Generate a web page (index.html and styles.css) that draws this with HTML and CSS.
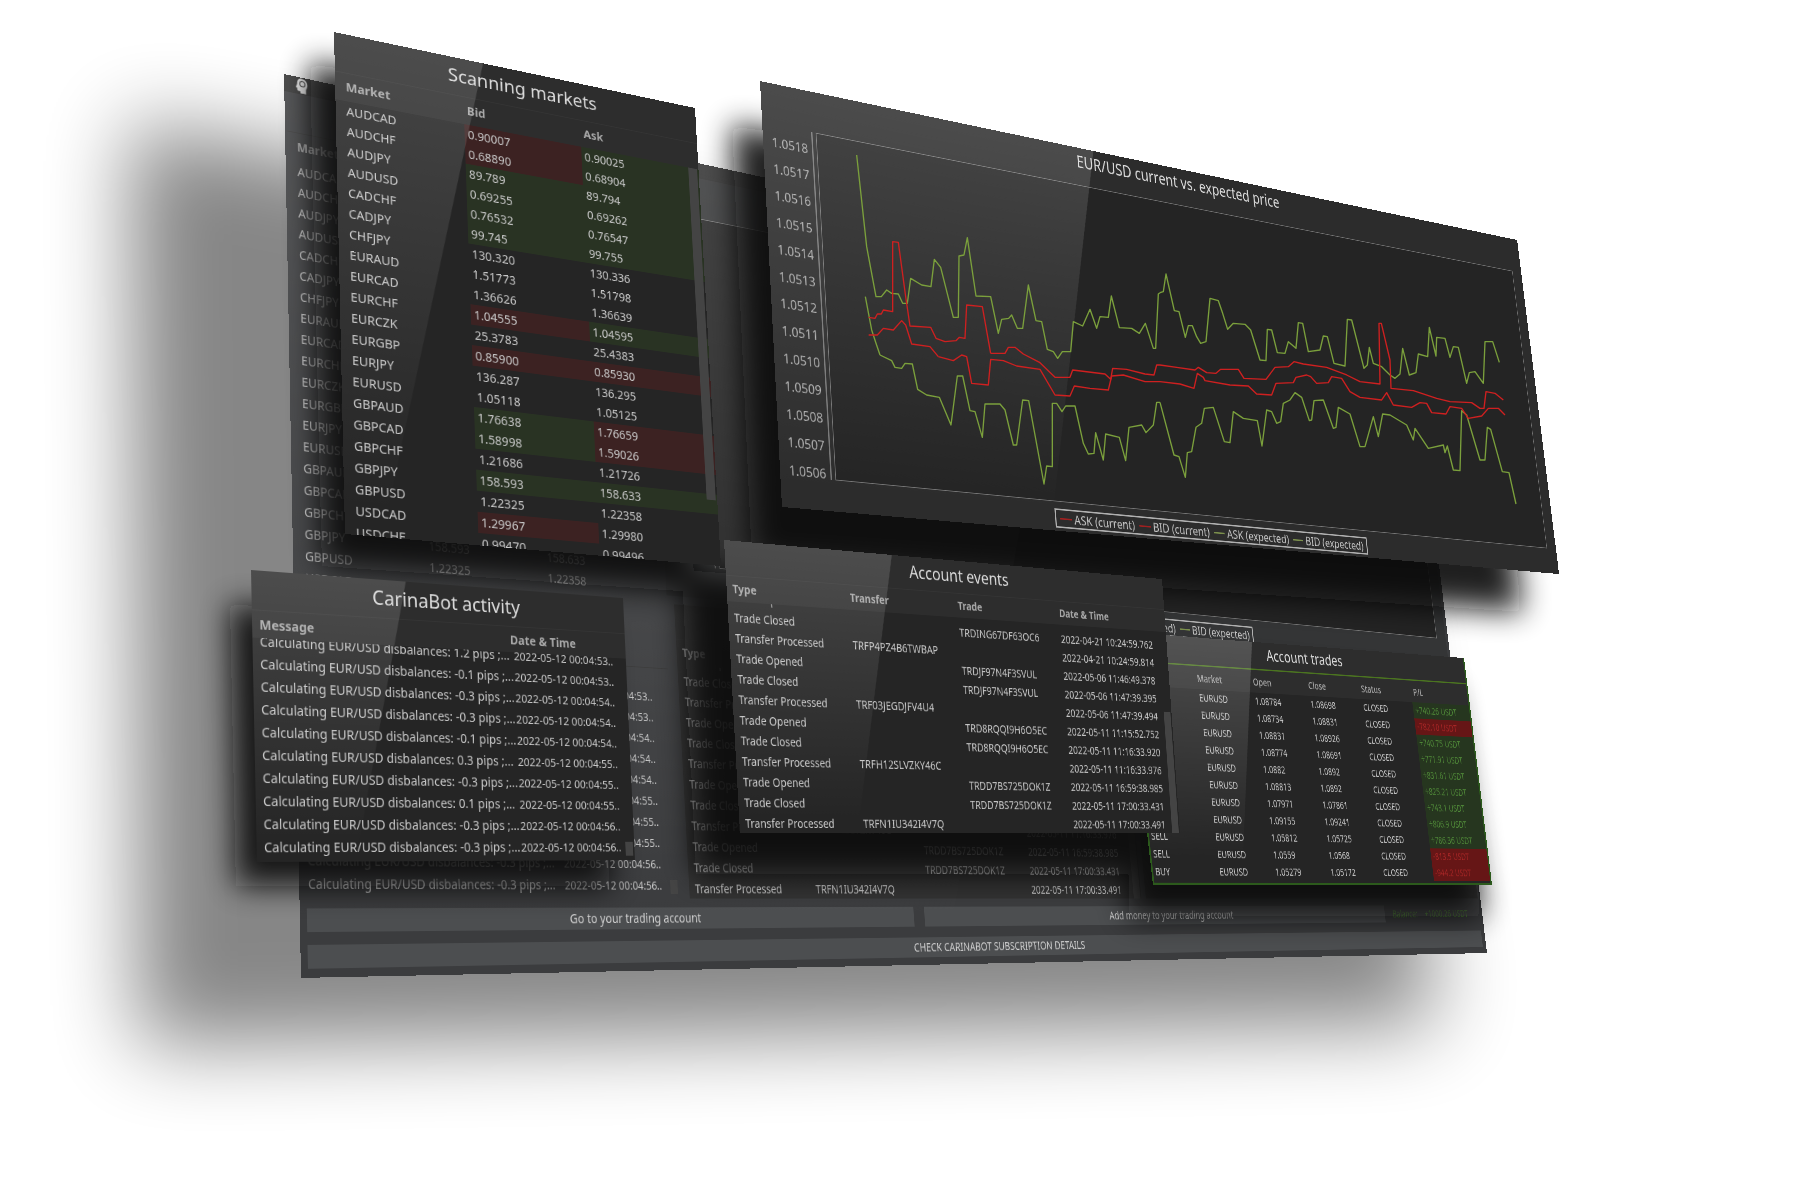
FILE: index.html
```html
<!DOCTYPE html>
<html lang="en">
<head>
<meta charset="utf-8">
<title>CarinaBot</title>
<link rel="stylesheet" href="styles.css">
</head>
<body>
<main class="stage">
  <svg class="layer" viewBox="0 0 1800 1200" aria-hidden="true">
    <defs>
      <filter id="wide" x="-20%" y="-20%" width="140%" height="140%"><feGaussianBlur stdDeviation="42"/></filter>
    </defs>
    <polygon class="cast-wide" filter="url(#wide)" points="130,120 1335,360 1438,1025 138,1045"/>
  </svg>

  <section class="panel desk" data-quad="284,74 1408,316 1487,953 301,978">
    <header class="desk-bar">
      <svg class="logo" viewBox="0 0 16 16" aria-hidden="true"><path d="M7 1c4 0 6 2.400 6 5.500 0 2-1 3-1.500 4.500V15H6v-2H4.500C3.500 13 3 12.500 3 11.500V10H1.500L3 6.500C3 3 4.500 1 7 1z"/><circle cx="8" cy="6" r="2.500"/></svg>
    </header>
    <div class="desk-body">
      <div class="desk-left">
        <div class="widget" data-table="markets" data-title=""></div>
        <div class="widget" data-table="activity" data-title=""></div>
      </div>
      <div class="desk-right">
        <div class="chart">
          <h2 class="title"></h2>
          <div class="axis"></div>
          <div class="plot"></div>
          <div class="legend"><span class="key ask">ASK (current)</span><span class="key ask">BID (current)</span><span class="key bid">ASK (expected)</span><span class="key bid">BID (expected)</span></div>
        </div>
        <div class="desk-row">
          <div class="widget wide" data-table="events" data-title=""></div>
          <div class="widget"></div>
        </div>
      </div>
    </div>
    <div class="actions">
      <button class="action">Go to your trading account</button>
      <button class="action">Add money to your trading account</button>
      <p class="balance"><span>Balance:</span><span>+1000.26 USDT</span></p>
    </div>
    <button class="action">CHECK CARINABOT SUBSCRIPTION DETAILS</button>
  </section>

  <svg class="layer" viewBox="0 0 1800 1200" aria-hidden="true">
    <defs>
      <filter id="near" x="-20%" y="-20%" width="140%" height="140%"><feGaussianBlur stdDeviation="15"/></filter>
    </defs>
    <g class="cast-near" filter="url(#near)">
      <polygon points="310,62 665,140 695,592 322,566"/>
      <polygon points="732,124 1480,290 1522,612 752,560"/>
      <polygon points="230,604 600,630 610,886 236,886"/>
      <polygon points="682,570 1140,605 1158,874 696,874"/>
      <polygon points="1140,660 1450,690 1482,916 1128,916"/>
    </g>
  </svg>

  <section class="panel market" data-quad="334,32 695,108 721,566 345,534">
    <div class="widget" data-table="markets" data-title="Scanning markets"></div>
  </section>

  <section class="panel price" data-quad="760,81 1517,240 1559,574 782,507">
    <div class="chart">
      <h2 class="title">EUR/USD current vs. expected price</h2>
      <div class="axis"><span>1.0518</span><span>1.0517</span><span>1.0516</span><span>1.0515</span><span>1.0514</span><span>1.0513</span><span>1.0512</span><span>1.0511</span><span>1.0510</span><span>1.0509</span><span>1.0508</span><span>1.0507</span><span>1.0506</span></div>
      <div class="plot"></div>
      <div class="legend"><span class="key ask">ASK (current)</span><span class="key ask">BID (current)</span><span class="key bid">ASK (expected)</span><span class="key bid">BID (expected)</span></div>
    </div>
  </section>

  <section class="panel trades" data-quad="1124,632 1464,658 1492,885 1153,885">
    <div class="widget" data-table="trades" data-title="Account trades"></div>
  </section>

  <section class="panel activity" data-quad="251,570 623,598 635,860 257,862">
    <div class="widget" data-table="activity" data-title="CarinaBot activity"></div>
  </section>

  <section class="panel events" data-quad="724,540 1162,579 1180,833 740,833">
    <div class="widget" data-table="events" data-title="Account events"></div>
  </section>

  <svg class="layer series" viewBox="0 0 1800 1200" role="img" aria-label="Current and expected EUR/USD prices">
    <g transform="translate(740 70) scale(.33333)">
      <polyline class="expected" points="350,255 380,530 408,680 424,680 440,660 455,670 475,672 488,700 502,700 512,625 545,645 573,650 583,568 602,592 640,742 655,742 657,558 672,555 682,503 708,678 752,680 775,790 785,748 806,745 815,735 832,775 848,775 865,645 888,752 905,755 922,838 940,845 953,865 967,845 992,845 1000,755 1028,768 1050,718 1070,775 1080,740 1105,742 1114,678 1138,773 1175,775 1198,790 1216,760 1240,835 1247,835 1255,672 1260,668"/>
      <polyline class="expected" points="376,680 395,780 408,820 420,855"/>
      <polyline class="current" points="386,742 405,745 412,732 424,732 430,720 458,725 458,515 475,517 497,680 510,768 572,772 588,805 615,815 648,812 658,802 675,805 680,705 727,710 752,850"/>
      <polyline class="current" points="386,795 412,795 430,775 460,780 485,752 497,765 515,822 570,830 595,860"/>
      <g transform="translate(1260 180)">
        <polyline class="expected" points="0,488 10,485 18,432 43,542 57,545 76,622 85,587 97,587 110,620 122,640 138,635 150,505 175,512 188,550 203,598 220,580 255,583 272,600 300,690 318,692 322,598 335,600 352,668 375,670 385,635 408,655 415,578 428,580 445,665 480,660 490,618 502,620 522,700 555,708 562,568 575,570 612,715 622,705 628,652 640,700 665,710 690,735 705,745 720,732 728,655 748,735 768,728 775,672 803,680 808,592 828,678 830,622 855,625 870,682 880,650 895,652 920,760 928,728 945,725 970,760 975,635 998,635 1018,697"/>
      </g>
      <g transform="translate(0 810)">
        <polyline class="expected" points="420,45 455,62 465,82 485,85 495,70 517,72 533,148 560,165 598,172 633,255 652,108 668,108 690,212 705,215 727,292 735,192 780,192 795,210 820,315 830,315 848,180 866,182 912,432 920,378 937,380 937,190 950,190 966,215 977,198 1005,198 1030,310 1045,342 1062,340 1067,278 1090,360 1097,282 1138,292 1157,362 1167,262 1205,255 1218,278 1240,255 1250,187 1260,187"/>
        <polyline class="current" points="752,40 795,40 805,22 825,22 850,42 900,68 910,78 945,112 990,112 998,90 1095,102 1112,118 1118,85 1160,88 1215,102 1242,105 1250,75 1260,75"/>
        <polyline class="current" points="595,50 640,62 665,45 680,50 695,130 745,135 752,58 790,62 830,78 900,88 945,165 990,168 1003,138 1050,145 1105,150 1115,108 1150,105 1215,125 1260,125"/>
      </g>
      <g transform="translate(1260 810)">
        <polyline class="expected" points="0,187 42,345 57,350 76,412 82,338 95,335 108,262 125,250 133,205 160,202 193,305 210,308 220,215 250,235 292,242 306,318 320,210 335,215 350,250 362,245 370,190 390,180 405,158 425,172 448,242 455,240 462,182 490,180 520,265 528,262 535,202 570,222 600,320 615,320 640,230 655,290 668,222 690,225 740,255 760,300 765,265 805,325 850,315 855,338 862,318 880,390 900,392 905,212 920,225 960,360 975,360 982,262 992,268 1027,395 1047,398 1068,492"/>
        <polyline class="current" points="0,75 50,82 105,90 115,82 140,98 168,100 182,88 235,88 252,115 318,118 345,82 385,80 402,65 430,72 500,82 560,105 600,125 660,132 657,-50 664,-50 690,60 693,145 760,152 830,175 870,185 935,188 960,205 972,205 978,155 1005,160 1030,180"/>
        <polyline class="current" points="0,125 60,132 102,145 112,100 130,112 135,122 210,135 265,138 290,162 335,165 348,130 400,128 408,112 440,105 452,110 470,130 505,128 515,110 545,115 570,155 600,172 665,180 680,158 700,195 755,202 780,188 800,190 815,218 858,222 870,200 905,205 925,235 965,228 985,205 1015,205 1035,225"/>
      </g>
    </g>
  </svg>
</main>
<script src="app.js"></script>
</body>
</html>
```
FILE: styles.css
```css
* { box-sizing: border-box; }

body {
  margin: 0;
  background: #fff;
  font: 14px/24px "Noto Sans", "Open Sans", sans-serif;
  color: #c8c8c8;
}

.stage {
  position: relative;
  width: 100%;
  aspect-ratio: 3 / 2;
  overflow: hidden;
}

.layer {
  position: absolute;
  inset: 0;
  width: 100%;
  height: 100%;
  pointer-events: none;
}

.cast-wide { fill: #000; opacity: .47; }
.cast-near { fill: #101010; opacity: .92; }

.series polyline { fill: none; stroke-width: 4; stroke-linejoin: round; }
.series .expected { stroke: #7ba03c; }
.series .current { stroke: #cf2020; }

/* Panels are laid out flat, then app.js projects each onto its quad. */
.panel {
  position: absolute;
  top: 0;
  left: 0;
  transform-origin: 0 0;
  background: #252525;
  overflow: hidden;
}

.market { width: 450px; height: 574px; --edge: polygon(0 0, 39% 0, 9% 100%, 0 100%); }
.price { width: 1415px; height: 528px; --edge: polygon(0 0, 38% 0, 29% 100%, 0 100%); }
.activity { width: 455px; height: 307px; --edge: polygon(0 0, 39% 0, 24% 100%, 0 100%); }
.events { width: 690px; height: 342px; --edge: polygon(0 0, 35% 0, 24% 100%, 0 100%); }
.trades {
  width: 690px;
  height: 342px;
  border: 3px solid #2c5a1c;
  border-top: 0;
  --edge: polygon(0 0, 35% 0, 24% 100%, 0 100%);
}
.desk { --edge: polygon(0 0, 62% 0, 45% 100%, 0 100%); }

.panel::after {
  content: "";
  position: absolute;
  inset: 0;
  clip-path: var(--edge);
  background: linear-gradient(rgba(255, 255, 255, .15), rgba(255, 255, 255, 0) 95%);
}
.panel.trades::after { background: linear-gradient(rgba(255, 255, 255, .18), rgba(255, 255, 255, 0) 90%); }

.panel > .widget, .panel > .chart { height: 100%; }

.widget { display: flex; flex-direction: column; overflow: hidden; background: #252525; }

.title {
  margin: 0;
  height: 41px;
  flex: none;
  background: #2d2d2d;
  color: #dcdcdc;
  font-size: 22px;
  font-weight: 400;
  line-height: 36px;
  text-align: center;
}

table { width: 100%; border-collapse: collapse; table-layout: fixed; text-align: left; }
th, td { height: 24px; padding: 0 12px; font-weight: 400; line-height: 24px; white-space: nowrap; }
.head { flex: none; background: #2d2d2d; }
.head th { height: 30px; border-top: 1px solid #343434; line-height: 29px; color: #a8a8a8; font-weight: 700; }
.rows { flex: 1; min-height: 0; overflow: hidden; position: relative; }
.rows::after {
  content: "";
  position: absolute;
  right: 2px;
  top: 0;
  width: 12px;
  height: 100%;
  background: #444;
}

.t-markets .title { height: 46px; line-height: 42px; }
.t-markets .head th { height: 33px; line-height: 30px; }
.t-markets .rows::after { height: 84%; }
.t-markets th:nth-child(-n+3), .t-markets td:nth-child(-n+3) { padding: 0 4px; }
.t-markets th:first-child, .t-markets td:first-child { padding-left: 12px; }
.t-activity .title { height: 42px; line-height: 38px; }
.t-activity .head th { height: 28px; line-height: 29px; }
.t-activity .rows table { margin-top: -8px; }
.t-activity .rows::after { top: 214px; height: 16px; width: 10px; }
.t-activity th, .t-activity td { padding: 0 0 0 8px; }
.t-activity td:nth-child(2) { padding-left: 12px; font-size: 13px; }
.t-events th, .t-events td { padding-right: 0; }
.t-events th:first-child, .t-events td:first-child { padding-left: 8px; }
.t-events .rows table { margin-top: -17px; }
.t-events .rows::after { top: 108px; }
.t-trades .title { height: 38px; line-height: 34px; }
.t-trades .head th { height: 33px; border-top: 2px solid #4b7420; font-weight: 500; }
.t-trades .rows::after { display: none; }
.t-trades th, .t-trades td { padding: 0 4px; }
.t-trades td:last-child { color: #4f8838; }
.t-trades td.down:last-child { color: #a82626; background: #661616; }
.t-trades td.up:last-child { background: #26361f; }

.up { background: #293323; }
.down { background: #3c2222; }

.chart {
  display: grid;
  grid-template-columns: 72px 1fr;
  grid-template-rows: 53px 1fr 38px;
  padding-right: 21px;
  background: #2c2c2c;
  font-size: 17px;
  line-height: 20px;
}
.chart .title { grid-column: 1 / 3; background: none; font-size: 23px; line-height: 38px; }
.axis {
  display: flex;
  flex-direction: column;
  justify-content: space-between;
  align-items: flex-end;
  padding: 13px 6px 0 0;
  margin-bottom: -3px;
  color: #b0b0b0;
}
.plot { border-left: 2px solid #777; padding-left: 5px; display: flex; }
.plot::before { content: ""; flex: 1; border: 1px solid #777; background: #242424; }
.legend {
  grid-column: 1 / 3;
  justify-self: center;
  display: flex;
  align-items: center;
  gap: 8px;
  height: 25px;
  margin: 9px 0 0 21px;
  padding: 0 6px;
  border: 2px solid #b0b0b0;
}
.key { display: flex; align-items: center; gap: 4px; }
.key::before { content: ""; width: 20px; height: 2px; background: #7b8f4c; }
.key.ask::before { background: #a02020; }

.desk {
  width: 1920px;
  height: 984px;
  display: flex;
  flex-direction: column;
  background: #3b3c3e;
}
.desk-bar { height: 20px; padding: 0 0 0 12px; background: #2e2e2e; }
.logo { display: block; width: 20px; height: 20px; fill: #eee; }
.logo circle { fill: none; stroke: #444; stroke-width: 1; }
.desk-body { display: flex; gap: 4px; height: 884px; padding: 0 6px 0 2px; }
.desk-left { display: flex; flex-direction: column; gap: 9px; width: 472px; }
.desk-left .widget { height: 307px; background: none; }
.desk-left .widget:first-child { height: 568px; }
.desk .title, .desk .head { background: none; }
.desk td { background: none; }
.desk-right { flex: 1; display: flex; flex-direction: column; gap: 10px; }
.desk-right .chart { height: 532px; background: #343536; }
.desk-row { display: flex; gap: 8px; height: 342px; margin-left: 10px; }
.desk-row .widget { flex: 1; background: #2e2e2e; }
.desk-row .wide { flex: none; width: 725px; background: #323232; }
.actions { display: grid; grid-template-columns: 812px 862px 1fr; gap: 17px; margin: 10px 8px 13px; height: 24px; }
.action {
  height: 24px;
  padding: 0;
  border: 0;
  background: #4c4e50;
  color: #d0d0d0;
  font: inherit;
  cursor: pointer;
}
.desk > .action { margin: 0 8px; }
.balance { display: flex; gap: 16px; margin: 0; color: #4a7a34; white-space: nowrap; }
```
FILE: app.js
```js
const tables = {
  markets: {
    widths: [33.3, 32.2, 34.5],
    head: ["Market", "Bid", "Ask"],
    rows: [
      ["AUDCAD", "-0.90007", "+0.90025"], ["AUDCHF", "-0.68890", "+0.68904"], ["AUDJPY", "+89.789", "+89.794"],
      ["AUDUSD", "+0.69255", "+0.69262"], ["CADCHF", "+0.76532", "+0.76547"], ["CADJPY", "+99.745", "+99.755"],
      ["CHFJPY", "130.320", "130.336"], ["EURAUD", "1.51773", "1.51798"], ["EURCAD", "1.36626", "1.36639"],
      ["EURCHF", "-1.04555", "+1.04595"], ["EURCZK", "25.3783", "25.4383"], ["EURGBP", "-0.85900", "-0.85930"],
      ["EURJPY", "136.287", "136.295"], ["EURUSD", "1.05118", "1.05125"], ["GBPAUD", "+1.76638", "-1.76659"],
      ["GBPCAD", "+1.58998", "-1.59026"], ["GBPCHF", "1.21686", "1.21726"], ["GBPJPY", "+158.593", "+158.633"],
      ["GBPUSD", "1.22325", "1.22358"], ["USDCAD", "-1.29967", "1.29980"], ["USDCHF", "0.99470", "0.99496"]
    ]
  },
  activity: {
    widths: [65, 35],
    head: ["Message", "Date & Time"],
    rows: [["1.2", "53"], ["-0.1", "53"], ["-0.3", "54"], ["-0.3", "54"], ["-0.1", "54"], ["0.3", "55"],
      ["-0.3", "55"], ["0.1", "55"], ["-0.3", "56"], ["-0.3", "56"]]
      .map(([pips, sec]) => [`Calculating EUR/USD disbalances: ${pips} pips ;...`, `2022-05-12 00:04:${sec}..`])
  },
  events: {
    widths: [23.6, 23.8, 24, 28.6],
    head: ["Type", "Transfer", "Trade", "Date & Time"],
    rows: [
      ["Trade Opened", "", "TRDING67DF63OC6", "2022-04-21 10:20:11.204"],
      ["Trade Closed", "", "TRDING67DF63OC6", "2022-04-21 10:24:59.762"],
      ["Transfer Processed", "TRFP4PZ4B6TWBAP", "", "2022-04-21 10:24:59.814"],
      ["Trade Opened", "", "TRDJF97N4F3SVUL", "2022-05-06 11:46:49.378"],
      ["Trade Closed", "", "TRDJF97N4F3SVUL", "2022-05-06 11:47:39.395"],
      ["Transfer Processed", "TRF03JEGDJFV4U4", "", "2022-05-06 11:47:39.494"],
      ["Trade Opened", "", "TRD8RQQI9H6O5EC", "2022-05-11 11:15:52.752"],
      ["Trade Closed", "", "TRD8RQQI9H6O5EC", "2022-05-11 11:16:33.920"],
      ["Transfer Processed", "TRFH12SLVZKY46C", "", "2022-05-11 11:16:33.976"],
      ["Trade Opened", "", "TRDD7BS725DOK1Z", "2022-05-11 16:59:38.985"],
      ["Trade Closed", "", "TRDD7BS725DOK1Z", "2022-05-11 17:00:33.431"],
      ["Transfer Processed", "TRFN1IU342I4V7Q", "", "2022-05-11 17:00:33.491"]
    ]
  },
  trades: {
    widths: [17.5, 15.8, 16.2, 16, 16.3, 18.2],
    head: ["Type", "Market", "Open", "Close", "Status", "P/L"],
    rows: [
      ["SELL", "1.08784", "1.08698", "+ +740.26 USDT"], ["BUY", "1.08734", "1.08831", "- -782.10 USDT"],
      ["BUY", "1.08831", "1.08926", "+ +740.75 USDT"], ["SELL", "1.08774", "1.08691", "+ +771.91 USDT"],
      ["BUY", "1.0882", "1.0892", "+ +831.61 USDT"], ["BUY", "1.08813", "1.0892", "+ +825.21 USDT"],
      ["SELL", "1.07971", "1.07861", "+ +743.1 USDT"], ["BUY", "1.09155", "1.09241", "+ +806.9 USDT"],
      ["SELL", "1.05812", "1.05725", "+ +786.36 USDT"], ["SELL", "1.0559", "1.0568", "- -813.5 USDT"],
      ["BUY", "1.05279", "1.05172", "- -944.2 USDT"]
    ].map(([side, open, close, pl]) => [side, "EURUSD", open, close, "CLOSED", pl])
  }
};

/* A leading sign on a market quote or "+ " / "- " on a result sets the cell colour. */
function cell(value, name, column) {
  const td = document.createElement("td");
  const signed = (name === "markets" && column > 0) || (name === "trades" && column === 5);
  if (signed && /^[+-]/.test(value)) {
    td.className = value[0] === "+" ? "up" : "down";
    value = value.slice(1).trim();
  }
  td.textContent = value;
  return td;
}

function grid(widths) {
  const table = document.createElement("table");
  const group = table.appendChild(document.createElement("colgroup"));
  widths.forEach(w => { group.appendChild(document.createElement("col")).style.width = w + "%"; });
  return table;
}

document.querySelectorAll("[data-table]").forEach(box => {
  const name = box.dataset.table;
  const data = tables[name];
  box.classList.add("t-" + name);
  const title = box.appendChild(document.createElement("h2"));
  title.className = "title";
  title.textContent = box.dataset.title;

  const head = box.appendChild(document.createElement("div"));
  head.className = "head";
  const headRow = head.appendChild(grid(data.widths)).insertRow();
  data.head.forEach(text => { headRow.appendChild(document.createElement("th")).textContent = text; });

  const rows = box.appendChild(document.createElement("div"));
  rows.className = "rows";
  const table = rows.appendChild(grid(data.widths));
  data.rows.forEach(values => {
    const row = table.insertRow();
    values.forEach((value, i) => row.appendChild(cell(value, name, i)));
  });
});

/* Projective map from a w x h box to four corners (clockwise from top left). */
function project(w, h, [[x0, y0], [x1, y1], [x2, y2], [x3, y3]]) {
  const dx1 = x1 - x2, dy1 = y1 - y2, dx2 = x3 - x2, dy2 = y3 - y2;
  const sx = x0 - x1 + x2 - x3, sy = y0 - y1 + y2 - y3;
  const den = dx1 * dy2 - dx2 * dy1;
  const g = (sx * dy2 - sy * dx2) / den, k = (dx1 * sy - dy1 * sx) / den;
  const m = [
    (x1 - x0 + g * x1) / w, (y1 - y0 + g * y1) / w, 0, g / w,
    (x3 - x0 + k * x3) / h, (y3 - y0 + k * y3) / h, 0, k / h,
    0, 0, 1, 0,
    x0, y0, 0, 1
  ];
  return `matrix3d(${m.map(n => n.toFixed(10)).join(",")})`;
}

function place() {
  const scale = document.querySelector(".stage").clientWidth / 1800;
  document.querySelectorAll("[data-quad]").forEach(panel => {
    const quad = panel.dataset.quad.split(" ").map(p => p.split(",").map(n => n * scale));
    panel.style.transform = project(panel.offsetWidth, panel.offsetHeight, quad);
  });
}

place();
addEventListener("resize", place);
```
